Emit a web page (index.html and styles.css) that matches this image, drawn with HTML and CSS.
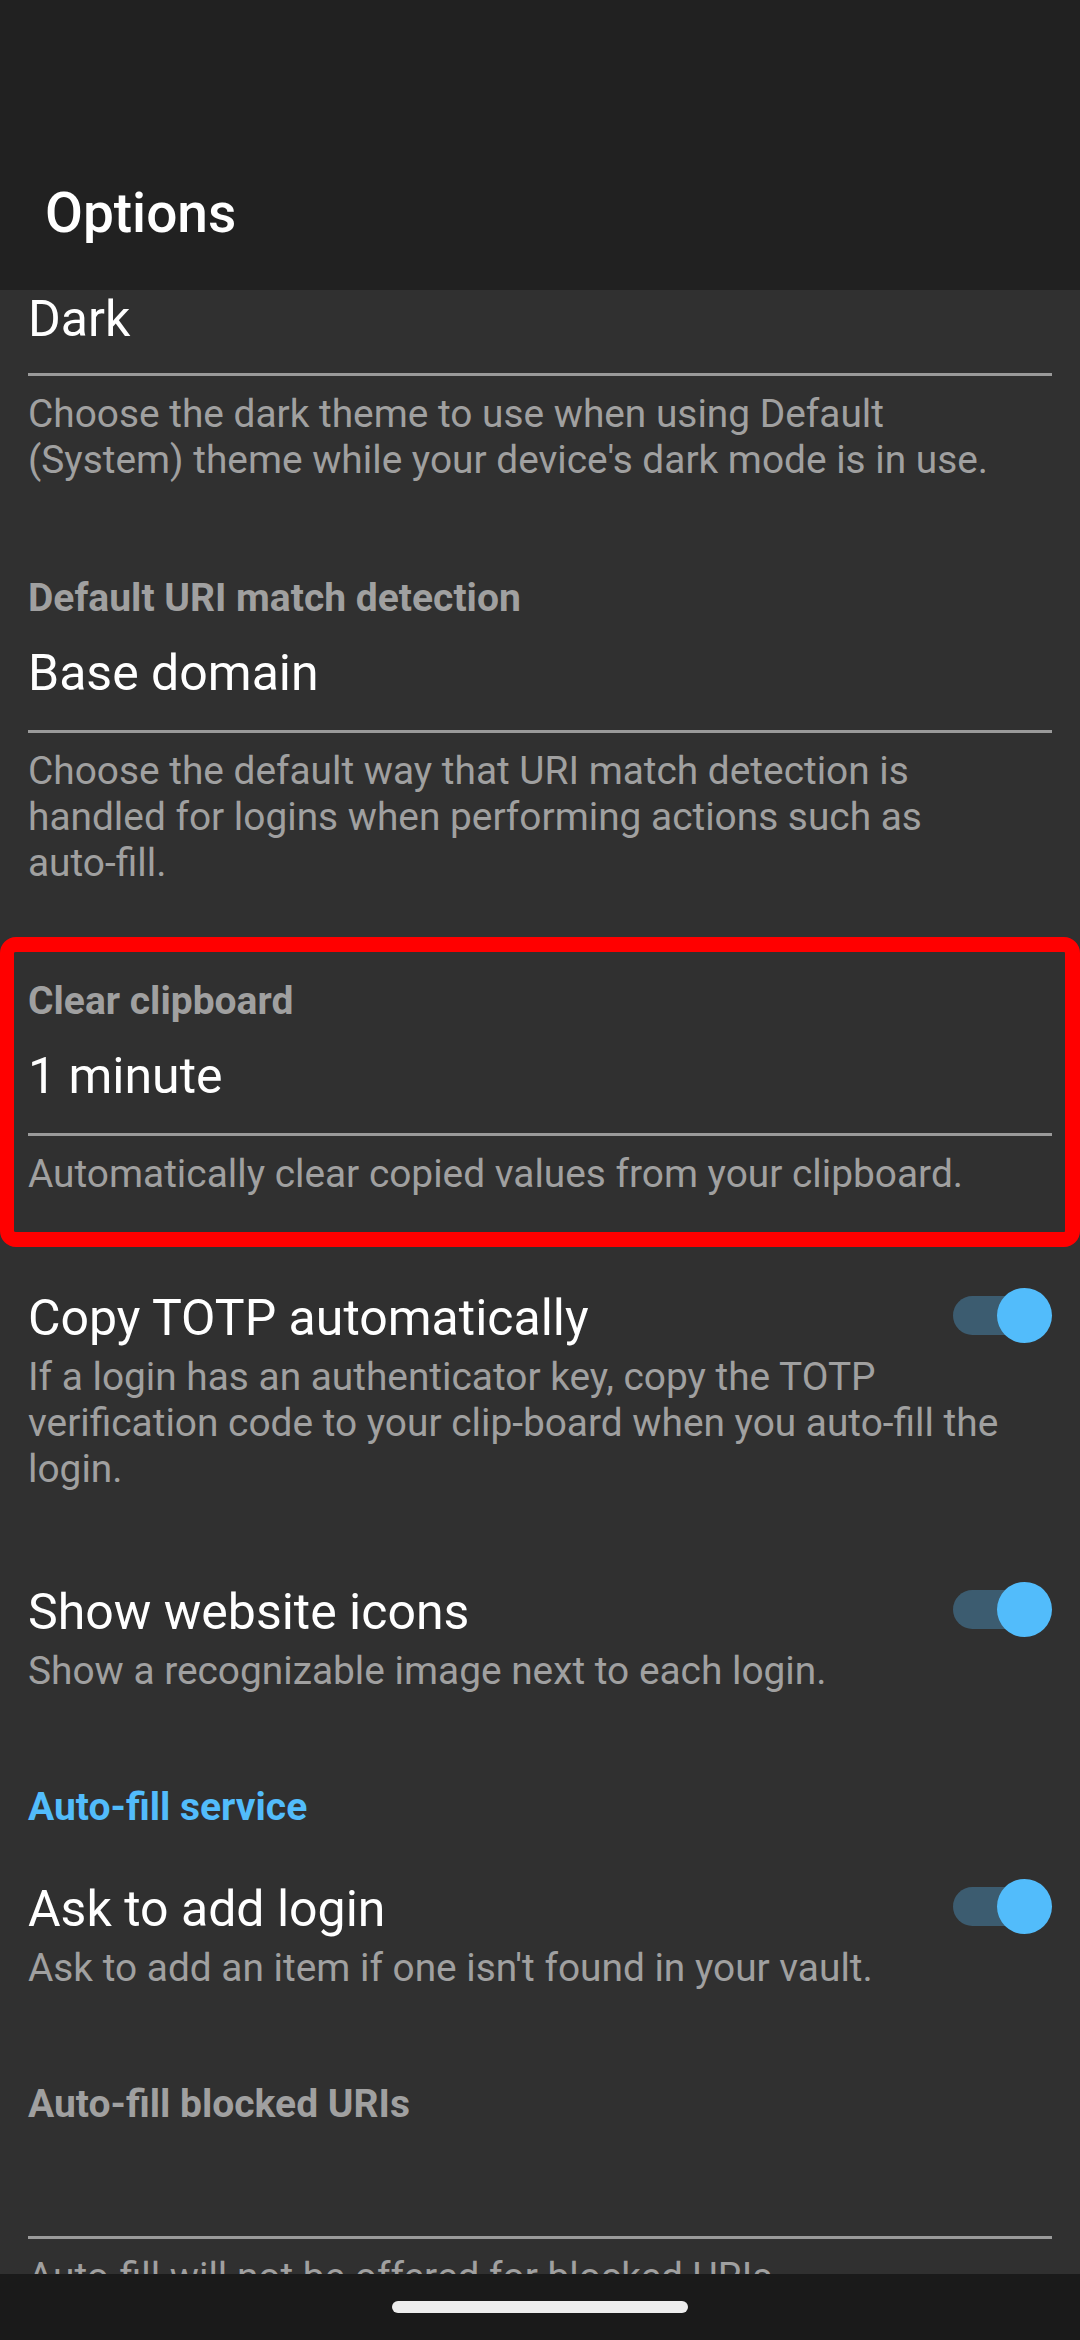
FILE: index.html
```html
<!DOCTYPE html>
<html lang="en">
<head>
<meta charset="utf-8">
<title>Options</title>
<link rel="stylesheet" href="styles.css">
</head>
<body>
<div class="screen">
  <header class="appbar">
    <div class="statusbar"></div>
    <div class="toolbar"><h1 class="title">Options</h1></div>
  </header>
  <main class="scroll">
    <div class="list">
      <section class="field field-cut">
        <div class="value">Dark</div>
        <div class="underline"></div>
        <p class="desc">Choose the dark theme to use when using Default (System) theme while your device's dark mode is in use.</p>
      </section>

      <section class="field">
        <div class="label">Default URI match detection</div>
        <div class="value">Base domain</div>
        <div class="underline"></div>
        <p class="desc">Choose the default way that URI match detection is handled for logins when performing actions such as <span class="nobr">auto-fill.</span></p>
      </section>

      <section class="field highlight">
        <div class="label">Clear clipboard</div>
        <div class="value">1 minute</div>
        <div class="underline"></div>
        <p class="desc">Automatically clear copied values from your clipboard.</p>
      </section>

      <section class="switch-row">
        <div class="switch-head">
          <div class="switch-title">Copy TOTP automatically</div>
          <div class="toggle"><span class="track"></span><span class="thumb"></span></div>
        </div>
        <p class="desc">If a login has an authenticator key, copy the TOTP verification code to your clip-board when you auto-fill the login.</p>
      </section>

      <section class="switch-row">
        <div class="switch-head">
          <div class="switch-title">Show website icons</div>
          <div class="toggle"><span class="track"></span><span class="thumb"></span></div>
        </div>
        <p class="desc">Show a recognizable image next to each login.</p>
      </section>

      <h2 class="section-header">Auto-fill service</h2>

      <section class="switch-row">
        <div class="switch-head">
          <div class="switch-title">Ask to add login</div>
          <div class="toggle"><span class="track"></span><span class="thumb"></span></div>
        </div>
        <p class="desc">Ask to add an item if one isn't found in your vault.</p>
      </section>

      <section class="field">
        <div class="label">Auto-fill blocked URIs</div>
        <div class="value"></div>
        <div class="underline"></div>
        <p class="desc">Auto-fill will not be offered for blocked URIs.</p>
      </section>
    </div>
  </main>
  <nav class="navbar"><span class="handle"></span></nav>
</div>
</body>
</html>
```

FILE: styles.css
```css
* {
  box-sizing: border-box;
  margin: 0;
  padding: 0;
}

html,
body {
  width: 1080px;
  height: 2340px;
  overflow: hidden;
  background: #303030;
}

body {
  font-family: Roboto, "Noto Sans", sans-serif;
}

.screen {
  display: flex;
  flex-direction: column;
  height: 2340px;
}

.appbar {
  flex: 0 0 290px;
  display: flex;
  flex-direction: column;
  background: #212121;
}

.statusbar {
  height: 136px;
}

.toolbar {
  height: 154px;
  display: flex;
  align-items: center;
  padding-left: 45px;
}

.title {
  font-size: 55px;
  font-weight: 500;
  line-height: 64px;
  color: #ffffff;
}

.scroll {
  flex: 1;
  overflow: hidden;
  background: #303030;
}

.list {
  display: flex;
  flex-direction: column;
  padding: 0 28px;
}

.field {
  margin-top: 94px;
}

.field-cut {
  margin-top: 0;
}

.field-cut .value {
  line-height: 59px;
  min-height: 59px;
}

.field-cut .underline {
  margin-top: 24px;
}

.label {
  font-size: 39px;
  font-weight: 700;
  line-height: 42px;
  color: #a0a0a0;
  margin-bottom: 25px;
}

.value {
  font-size: 50px;
  line-height: 58px;
  min-height: 58px;
  color: #ffffff;
}

.underline {
  height: 3px;
  margin-top: 28px;
  background: #9a9a9a;
}

.underline + .desc {
  margin-top: 15px;
}

.desc {
  font-size: 38.85px;
  line-height: 46px;
  color: #a0a0a0;
  padding-right: 8px;
}

.nobr {
  white-space: nowrap;
}

.highlight {
  margin: 51px -28px 0;
  padding: 28px 13px 35px 14px;
  border-style: solid;
  border-color: #ff0000;
  border-width: 15px 15px 15px 14px;
  border-radius: 16px;
}

.switch-row {
  margin-top: 91px;
}

.highlight + .switch-row {
  margin-top: 42px;
}

.section-header + .switch-row {
  margin-top: 52px;
}

.switch-row + .field {
  margin-top: 92px;
}

.switch-head {
  display: flex;
  align-items: center;
  justify-content: space-between;
  height: 58px;
}

.switch-title {
  font-size: 50px;
  line-height: 58px;
  color: #ffffff;
}

.switch-head + .desc {
  margin-top: 7px;
}

.toggle {
  position: relative;
  flex: none;
  width: 99px;
  height: 55px;
  margin-bottom: 6px;
}

.toggle .track {
  position: absolute;
  left: 0;
  top: 8px;
  width: 93px;
  height: 39px;
  border-radius: 20px;
  background: #3c5c70;
}

.toggle .thumb {
  position: absolute;
  right: 0;
  top: 0;
  width: 55px;
  height: 55px;
  border-radius: 50%;
  background: #52bcfb;
}

.section-header {
  margin-top: 92px;
  font-size: 39px;
  font-weight: 700;
  line-height: 42px;
  color: #52bcfb;
}

.navbar {
  flex: 0 0 66px;
  display: flex;
  align-items: center;
  justify-content: center;
  background: #1a1a1a;
}

.handle {
  width: 296px;
  height: 12px;
  border-radius: 6px;
  background: #eeeeee;
}
```
